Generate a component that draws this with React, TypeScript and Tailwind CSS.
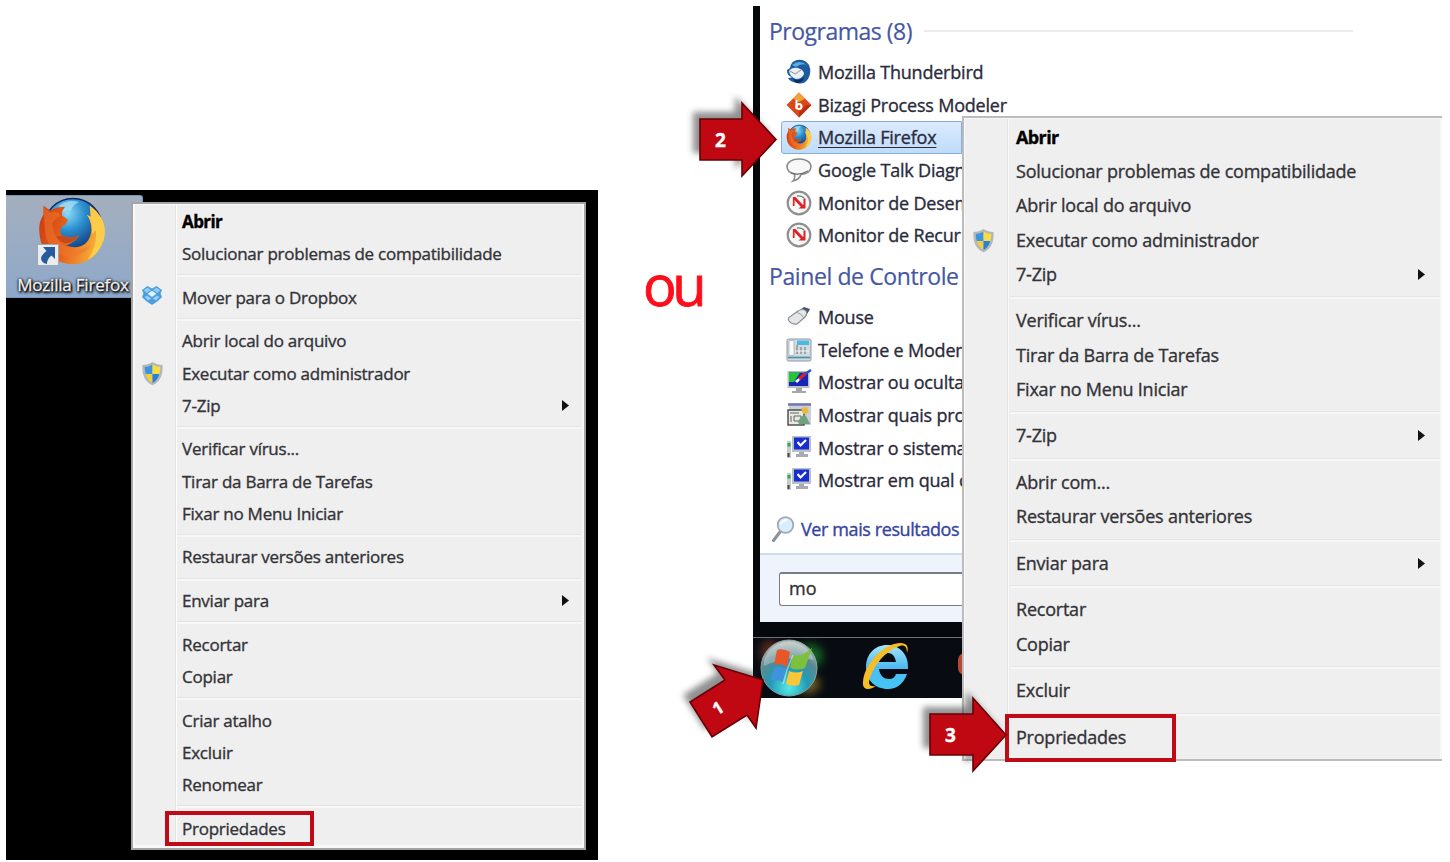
import { ReactNode } from 'react';

type Entry = { label: string; bold?: boolean; icon?: ReactNode; sub?: boolean; boxed?: boolean };

function Shield() {
  return (
    <svg viewBox="0 0 24 26" className="h-[25px] w-[23px]">
      <path d="M12 1 C9 3 5 4 1.500 4 C1 13 3 21 12 25.300 C21 21 23 13 22.500 4 C19 4 15 3 12 1Z" fill="#b4b7ba" />
      <path d="M12 3.500 C9.500 5 7 5.800 4 6 C4 9 4.300 11.500 5 13.500 H12Z" fill="#3c94de" />
      <path d="M12 3.500 C14.500 5 17 5.800 20 6 C20 9 19.700 11.500 19 13.500 H12Z" fill="#f9dd45" />
      <path d="M5 13.500 H12 V23 C8.500 21 6 18 5 13.500Z" fill="#f3ce3a" />
      <path d="M19 13.500 H12 V23 C15.500 21 18 18 19 13.500Z" fill="#2582dc" />
    </svg>
  );
}

function Dropbox() {
  return (
    <svg viewBox="0 0 22 21" className="-mt-[3px] h-[21px] w-[22px]">
      <path d="M6.500 1 L11 3.500 L15.500 1 L21 5 L19.500 8.500 L21 12 L17 16 L11 20 L5 16 L1 12 L2.500 8.500 L1 5Z" fill="#4c9ddb" />
      <path d="M6.500 2.500 L10 5.300 L5.500 8 L2.700 5.200Z M15.500 2.500 L12 5.300 L16.500 8 L19.300 5.200Z" fill="#8fcbf3" />
      <path d="M11 5.800 L15.500 8.700 L11 12 L6.500 8.700Z" fill="#e2f3fd" />
      <path d="M6 10.500 L10.500 13.500 L7 15.500 L3.500 12Z M16 10.500 L11.500 13.500 L15 15.500 L18.500 12Z" fill="#8fcdf5" />
    </svg>
  );
}

function FoxLogo({ className }: { className: string }) {
  return (
    <svg viewBox="0 0 70 70" className={className}>
      <defs>
        <radialGradient id="globe" cx="0.4" cy="0.25" r="0.75">
          <stop offset="0" stopColor="#8fdcf5" />
          <stop offset="0.4" stopColor="#2b8fd0" />
          <stop offset="1" stopColor="#0b2566" />
        </radialGradient>
        <linearGradient id="tail" x1="0" y1="0" x2="1" y2="0.2">
          <stop offset="0" stopColor="#c93a12" />
          <stop offset="0.5" stopColor="#e8641b" />
          <stop offset="1" stopColor="#f7b43c" />
        </linearGradient>
      </defs>
      <circle cx="36" cy="31" r="29.500" fill="url(#globe)" stroke="#0d2b63" strokeWidth="1.500" />
      <path d="M22 9 Q30 2 42 5 Q34 9 34 14 Q27 12 24 18Z" fill="#a9e2f5" opacity="0.75" />
      <path d="M53 9 C66 18 71 31 67 44 C62 60 49 69 34 68 C16 67 3 54 2 37 C1 28 3 23 6 18 L6 9 L13 14 Q18 10 28 10 Q24 15 25 19 Q28 21 31 23 Q29 28 25 30 Q21 35 25 39 Q33 43 42 39 Q38 46 29 49 Q40 54 49 47 C57 39 56 26 50 18 L54 20 Z" fill="url(#tail)" />
      <path d="M53 9 C66 18 71 31 67 44 C64 53 58 60 51 64 C57 54 61 43 59 34 L55 38 C56 29 54 23 50 18 L54 20Z" fill="#fbd34d" opacity="0.85" />
      <path d="M6 10 L13 16 Q20 13 23 19 Q18 21 15 27 Q16 43 29 51 Q42 57 54 49 Q45 61 32 61 Q12 57 8 38Z" fill="#ef762b" opacity="0.55" />
      <path d="M25 39 Q33 43 42 39 Q37 47 28 47 Q22 45 19 40Z" fill="#c9481a" />
    </svg>
  );
}

function Arrow({ box, view, points, children }: { box: string; view: string; points: string; children: ReactNode }) {
  return (
    <div className={box}>
      <svg viewBox={view} className="absolute inset-0 h-full w-full overflow-visible">
        <polygon points={points} fill="#222" opacity="0.5" transform="translate(-7 -7)" className="blur-[3px]" />
        <polygon points={points} fill="#bf0811" stroke="#650006" strokeWidth="1.600" />
      </svg>
      {children}
    </div>
  );
}

function Menu({ groups, row, sep, gutter, text, arrowPad, box }: {
  groups: Entry[][]; row: string; sep: string; gutter: string; text: string; arrowPad: string; box: string;
}) {
  return (
    <div className="flex flex-col">
      {groups.map((group, g) => (
        <div key={g} className="flex flex-col">
          {g > 0 && (
            <div className={`flex items-center ${sep}`}>
              <div className={`shrink-0 ${gutter}`} />
              <div className="h-[3px] flex-1 border-t border-b-2 border-t-[#e4e4e4] border-b-[#f7f7f7]" />
            </div>
          )}
          {group.map((e, i) => (
            <div key={i} className={`flex items-center ${row}`}>
              <div className={`flex shrink-0 justify-center ${gutter}`}>{e.icon}</div>
              <div className={`relative flex flex-1 items-center whitespace-nowrap ${text}`}>
                <span className={e.bold ? 'font-bold tracking-[-0.6px] text-black' : 'text-[#333338]'}>{e.label}</span>
                {e.boxed && <span className={`absolute border-[#bf0a18] ${box}`} />}
              </div>
              {e.sub && (
                <svg viewBox="0 0 7 11" className={`h-[11px] w-[7px] ${arrowPad}`}>
                  <path d="M0 0 L7 5.500 L0 11Z" fill="#111" />
                </svg>
              )}
            </div>
          ))}
        </div>
      ))}
    </div>
  );
}

const desktopMenu: Entry[][] = [
  [{ label: 'Abrir', bold: true }, { label: 'Solucionar problemas de compatibilidade' }],
  [{ label: 'Mover para o Dropbox', icon: <Dropbox /> }],
  [{ label: 'Abrir local do arquivo' }, { label: 'Executar como administrador', icon: <Shield /> }, { label: '7-Zip', sub: true }],
  [{ label: 'Verificar vírus...' }, { label: 'Tirar da Barra de Tarefas' }, { label: 'Fixar no Menu Iniciar' }],
  [{ label: 'Restaurar versões anteriores' }],
  [{ label: 'Enviar para', sub: true }],
  [{ label: 'Recortar' }, { label: 'Copiar' }],
  [{ label: 'Criar atalho' }, { label: 'Excluir' }, { label: 'Renomear' }],
  [{ label: 'Propriedades', boxed: true }],
];

const startMenu: Entry[][] = [
  [
    { label: 'Abrir', bold: true },
    { label: 'Solucionar problemas de compatibilidade' },
    { label: 'Abrir local do arquivo' },
    { label: 'Executar como administrador', icon: <Shield /> },
    { label: '7-Zip', sub: true },
  ],
  [{ label: 'Verificar vírus...' }, { label: 'Tirar da Barra de Tarefas' }, { label: 'Fixar no Menu Iniciar' }],
  [{ label: '7-Zip', sub: true }],
  [{ label: 'Abrir com...' }, { label: 'Restaurar versões anteriores' }],
  [{ label: 'Enviar para', sub: true }],
  [{ label: 'Recortar' }, { label: 'Copiar' }],
  [{ label: 'Excluir' }],
  [{ label: 'Propriedades', boxed: true }],
];

function Icon({ children }: { children: ReactNode }) {
  return <svg viewBox="0 0 26 26" className="h-[26px] w-[26px]">{children}</svg>;
}

const thunderbird = (
  <Icon>
    <path d="M11 1 Q19 0 23 6 Q26 13 22 20 Q18 26 11 24 Q4 23 2 19 Q5 19 6 18 Q1 17 1 11 L4 9 Q5 2 11 1Z" fill="#1d5b9f" />
    <path d="M6 6 Q13 0 21 6 Q15 4 10 8Z" fill="#5aabe0" />
    <path d="M3 12 Q6 8 12 9 Q18 11 18 15 Q16 20 10 20 Q4 18 3 12Z" fill="#eceff1" />
    <path d="M4 12 L9 15 L15 11" fill="none" stroke="#86949f" />
    <path d="M7 20 Q14 23 18 18 Q17 24 10 24Z" fill="#0c2c5c" />
  </Icon>
);
const bizagi = (
  <Icon>
    <path d="M13 0.500 L25.500 13 L13 25.500 L0.500 13Z" fill="#d9481c" />
    <path d="M13 0.500 L19 6.500 L13 10 L7 6.500Z" fill="#f0a13a" />
    <path d="M13 25.500 L25.500 13 H20 L13 20Z" fill="#b92f10" />
    <path d="M10.500 8 V17" stroke="#fff" strokeWidth="2" />
    <circle cx="13" cy="14.500" r="2.500" fill="none" stroke="#fff" strokeWidth="2" />
  </Icon>
);
const talk = (
  <Icon>
    <path d="M13 2 C20 2 25 5 25 9.500 C25 14 21 17 15 17.500 C14 21 11 23 7 24 C9 22 9 20 8.500 17 C4 16 1 14 1 9.500 C1 5 6 2 13 2Z" fill="#f7f7f7" stroke="#8b8b8b" strokeWidth="1.600" />
    <path d="M5 16 Q13 19 22 14" stroke="#666" strokeWidth="1.200" fill="none" />
  </Icon>
);
const gauge = (
  <Icon>
    <circle cx="13" cy="13" r="11.300" fill="#f6f7f6" stroke="#8d908f" strokeWidth="2.200" />
    <path d="M11 6 A8 8 0 0 1 18 8" fill="none" stroke="#5e8c76" strokeWidth="1.300" />
    <path d="M8 7.500 L16.500 16.500" fill="none" stroke="#df2027" strokeWidth="2.800" />
    <path d="M7.700 7 V16" stroke="#df2027" strokeWidth="1.700" />
    <path d="M19.500 8.500 V18.500 H12.500 L17.500 14.500 V8.500Z" fill="#df2027" />
  </Icon>
);
const mouse = (
  <Icon>
    <path d="M14 6 L18 3 L24 5 L20 12Z" fill="#46536c" />
    <path d="M12 7 Q17 4 20 7 Q22 10 18 14 L11 20 Q6 21 3 17 Q1 14 5 12Z" fill="#e4e6e8" stroke="#8b8f94" strokeWidth="1.200" />
    <path d="M10 8 Q15 9 18 14" fill="none" stroke="#9a9da3" />
  </Icon>
);
const phone = (
  <Icon>
    <rect x="1" y="2" width="24" height="22" rx="1.500" fill="#d3dade" stroke="#8f999f" />
    <rect x="11" y="3.500" width="12" height="4.500" fill="#4cb9e2" />
    <rect x="3" y="3.500" width="5" height="15" rx="1" fill="#fafafa" stroke="#a1a9ae" strokeWidth="0.700" />
    <path d="M11 8 V17 M15 10 V17 M19 10 V17" stroke="#7e8990" strokeWidth="1.300" />
    <path d="M9 14 H23" stroke="#f4f6f7" strokeWidth="1" />
    <path d="M2 20.500 H24" stroke="#4f93b2" strokeWidth="1.800" />
  </Icon>
);
const paint = (
  <Icon>
    <rect x="1.500" y="2" width="22" height="17" fill="#b9bfc1" />
    <rect x="3" y="3.500" width="19" height="13.500" fill="#1727b5" />
    <path d="M3 3.500 H14 L8 13 H3Z" fill="#24c636" />
    <path d="M9 12 L14 8 L15 10 L11 14Z" fill="#fff" />
    <path d="M13 10 L20 4" stroke="#d9232b" strokeWidth="3" />
    <path d="M19 5 L25 1" stroke="#2456c4" strokeWidth="2.500" />
    <path d="M10 19 H16 V22 H20 V24 H6 V22 H10Z" fill="#a5aaa9" />
  </Icon>
);
const programs = (
  <Icon>
    <rect x="3" y="1" width="22" height="22" fill="#c9cfdb" />
    <path d="M2 2.500 H25" stroke="#7675b2" strokeWidth="2.500" />
    <rect x="2" y="8" width="16" height="15" fill="#e9e9df" stroke="#45474a" strokeWidth="1.400" />
    <path d="M4 11 H13 M5 14 V20 M8 14 H15 V19 H8Z" stroke="#62666b" fill="none" />
    <path d="M15 6 L21 5 L23 11 L17 12Z" fill="#ebb93c" />
    <path d="M12 20 Q16 11 20 14 L24 22 H13Z" fill="#6fa27b" />
  </Icon>
);
const computer = (
  <Icon>
    <rect x="1" y="6" width="4" height="17" fill="#c6cacd" />
    <rect x="1.500" y="8" width="3" height="3.500" fill="#2cae45" />
    <rect x="1.500" y="18" width="2" height="4" fill="#41464a" />
    <rect x="6" y="1" width="19" height="16" fill="#bcc1c7" />
    <rect x="8" y="2.500" width="15" height="12" fill="#182dcf" />
    <path d="M11.500 7 L14.500 10.500 L20 5" fill="none" stroke="#fff" strokeWidth="2.200" />
    <path d="M13 17 H18 V19 H22 V22 H10 V19 H13Z" fill="#a7abae" />
  </Icon>
);

type Item = { label: string; icon: ReactNode; hot?: boolean };
const programList: Item[] = [
  { label: 'Mozilla Thunderbird', icon: thunderbird },
  { label: 'Bizagi Process Modeler', icon: bizagi },
  { label: 'Mozilla Firefox', icon: <FoxLogo className="h-[27px] w-[26px]" />, hot: true },
  { label: 'Google Talk Diagn', icon: talk },
  { label: 'Monitor de Desem', icon: gauge },
  { label: 'Monitor de Recur', icon: gauge },
];
const controlList: Item[] = [
  { label: 'Mouse', icon: mouse },
  { label: 'Telefone e Modem', icon: phone },
  { label: 'Mostrar ou oculta', icon: paint },
  { label: 'Mostrar quais pro', icon: programs },
  { label: 'Mostrar o sistema', icon: computer },
  { label: 'Mostrar em qual c', icon: computer },
];

function AppRows({ items }: { items: Item[] }) {
  return (
    <div className="ml-[21px] flex flex-col">
      {items.map((it, i) => (
        <div
          key={i}
          className={`flex h-[32.7px] items-center gap-[6px] rounded-l-[3px] border pl-[4px] text-[18px] whitespace-nowrap tracking-[-0.2px] text-[#2b2b3c] ${
            it.hot ? 'border-[#86acd8] bg-linear-to-b from-[#dcebfd] to-[#bfdbfb]' : 'border-transparent'
          }`}
        >
          <div className="-mt-px shrink-0">{it.icon}</div>
          <span className={it.hot ? 'underline underline-offset-[3px]' : ''}>{it.label}</span>
        </div>
      ))}
    </div>
  );
}

function StartOrb() {
  return (
    <svg viewBox="0 0 66 60" className="h-[60px] w-[66px] overflow-visible">
      <defs>
        <radialGradient id="orb" cx="0.5" cy="0.85" r="0.85">
          <stop offset="0" stopColor="#55ebe8" />
          <stop offset="0.4" stopColor="#2399b5" />
          <stop offset="0.7" stopColor="#5c8a91" />
          <stop offset="1" stopColor="#c2c4bd" />
        </radialGradient>
      </defs>
      <ellipse cx="50" cy="18" rx="13" ry="12" fill="#1f9d2b" opacity="0.6" className="blur-[4px]" />
      <ellipse cx="10" cy="14" rx="10" ry="12" fill="#a4462b" opacity="0.5" className="blur-[4px]" />
      <ellipse cx="48" cy="46" rx="12" ry="10" fill="#a78b31" opacity="0.6" className="blur-[4px]" />
      <circle cx="29" cy="30" r="28" fill="url(#orb)" stroke="#87a5a8" strokeWidth="1" />
      <path d="M4 22 Q12 4 29 4 Q46 4 54 22 Q30 16 4 28Z" fill="#fff" opacity="0.3" />
      <path d="M17 12 Q23 10 30 14 L27 29 Q20 24 14 27Z" fill="#e9562a" />
      <path d="M33 17 Q41 20 52 10 L45 30 Q38 33 30 30Z" fill="#7cc03d" />
      <path d="M14 30 Q19 27 26 31 L23 44 Q17 40 10 43Z" fill="#3f93dc" />
      <path d="M29 33 Q36 36 43 33 L39 47 Q33 49 26 46Z" fill="#fbc738" />
      <path d="M33 17 L27 32 L23 46" stroke="#eaf5dd" strokeWidth="1.500" opacity="0.5" fill="none" />
    </svg>
  );
}

function Explorer() {
  return (
    <svg viewBox="0 0 50 50" className="h-[50px] w-[50px]">
      <defs>
        <linearGradient id="ie" x1="0" y1="0" x2="0" y2="1">
          <stop offset="0" stopColor="#a4e6fb" />
          <stop offset="0.5" stopColor="#50baf0" />
          <stop offset="1" stopColor="#43c7f5" />
        </linearGradient>
      </defs>
      <path fillRule="evenodd" d="M26 4 C39 4 48 14 47 28 H18 C19 35 23 38 28 38 C32 38 34 36 35 33 H46 C43 42 36 48 27 48 C14 48 5 39 5 26 C5 13 14 4 26 4Z M18 21 H35 C34 15 31 12 27 12 C22 12 19 15 18 21Z" fill="url(#ie)" />
      <path d="M46 12 C49 3 43 0 33 3 C17 8 3 26 2 41 C1 49 8 50 15 45 C8 46 7 43 9 37 C13 24 24 11 36 6 C42 3 46 4 46 12Z" fill="#f5bd27" />
    </svg>
  );
}

export default function App() {
  return (
    <div className="relative h-[862px] w-[1450px] overflow-hidden bg-white font-['Open_Sans',sans-serif] [-webkit-text-stroke-width:0.35px]">
      <div className="flex items-start">
        <section className="relative mt-[190px] ml-[6px] flex h-[670px] w-[592px] flex-col bg-black">
          <div className="mt-[5px] flex h-[103px] w-[137px] flex-col items-center rounded-r-[3px] border border-l-0 border-[#7697bd] bg-linear-to-b from-[#a4afbd] to-[#8ea8ca]">
            <div className="relative mt-px mr-[4px] h-[69px] w-[70px] shrink-0">
              <FoxLogo className="h-[69px] w-[70px]" />
              <svg viewBox="0 0 22 22" className="absolute bottom-0 left-0 h-[22px] w-[22px]">
                <rect x="0.500" y="0.500" width="21" height="21" fill="#e9edf1" stroke="#a2a7ac" />
                <path d="M6 3 H18 V15 L14.500 11.500 Q10 15 10 20 Q4 19 4 14 Q5 10 9.500 7Z" fill="#265b9e" />
              </svg>
            </div>
            <span className="mt-[7px] mr-[2px] text-[17px] leading-[24px] tracking-[-0.2px] whitespace-nowrap text-[#f0f0f0] [text-shadow:0_0_2px_#000,1px_1px_2px_#000,0_0_3px_#000,1px_2px_3px_#000]">Mozilla Firefox</span>
          </div>
          <div className="absolute top-[12px] left-[125px] h-[648px] w-[455px] border-2 border-[#a5a5a5] bg-[#f9f9f9] p-[2px]">
            <div className="relative h-full bg-[#efefef]">
              <div className="absolute inset-y-0 left-[40px] w-[2px] border-l border-[#e3e3e3] bg-white" />
              <div className="relative -mt-[0.6px]">
                <Menu groups={desktopMenu} row="h-[32.2px]" sep="h-[11.5px]" gutter="w-[42px] pr-[8px]" text="pl-[5px] text-[17px] tracking-[-0.25px]" arrowPad="mr-[13px]" box="top-[-5px] left-[-12px] h-[35px] w-[149px] border-[4px]" />
              </div>
            </div>
          </div>
        </section>

        <div className="mt-[256px] ml-[45px] w-[62px] text-[56px] leading-[56px] tracking-[-4.5px] text-[#ff0d1a] [-webkit-text-stroke-width:0.8px]">ou</div>

        <section className="relative mt-[6px] ml-[48px] w-[209px]">
          <div className="h-[618px] border-l-[7px] border-[#05080b] bg-white">
            <div className="flex h-[50px] w-[593px] items-center gap-[12px] pl-[9px] text-[23px] whitespace-nowrap tracking-[-0.5px] text-[#4557a5] [-webkit-text-stroke-width:0.2px]">
              <span>Programas (8)</span>
              <span className="h-[2px] flex-1 bg-[#ececec]" />
            </div>
            <AppRows items={programList} />
            <div className="flex h-[49px] items-center pl-[9px] text-[23px] whitespace-nowrap tracking-[-0.4px] text-[#4557a5] [-webkit-text-stroke-width:0.2px]">Painel de Controle</div>
            <AppRows items={controlList} />
            <div className="mt-[8px] flex h-[48px] items-center gap-[6px] pl-[12px] text-[18px] tracking-[-0.4px] whitespace-nowrap text-[#3444a0]">
              <svg viewBox="0 0 23 26" className="h-[26px] w-[23px] shrink-0">
                <path d="M8 16 L1.500 24.500" stroke="#8d9297" strokeWidth="3" strokeLinecap="round" />
                <circle cx="13.500" cy="9" r="7.800" fill="#d9edfb" stroke="#a0acb8" strokeWidth="1.800" />
                <path d="M9 8 Q11 4 15 4" stroke="#fff" strokeWidth="2" fill="none" />
              </svg>
              <span>Ver mais resultados</span>
            </div>
            <div className="flex h-[69px] items-center border-t-2 border-[#cfdcec] bg-[#eff3fc] pl-[19px]">
              <div className="flex h-[34px] flex-1 items-center rounded-l-[3px] border border-t-2 border-r-0 border-[#777d83] bg-white pb-[2px] pl-[9px] text-[18px] text-[#333]">mo</div>
            </div>
          </div>
          <div className="-mt-[2px] h-[16px] border-b border-[#6c7277] bg-[#05090d]" />
          <div className="flex h-[60px] items-center overflow-hidden bg-[#080c12] pl-[7px]">
            <StartOrb />
            <div className="-mt-[4px] ml-[35px] shrink-0"><Explorer /></div>
            <div className="-mt-[8px] ml-[47px] h-[22px] w-[14px] shrink-0 rounded-full bg-[#b94a31]" />
          </div>
        </section>
      </div>

      <div className="absolute top-[116px] left-[962px] h-[645px] w-[480px] border-y-2 border-l-2 border-[#bcbcbc] bg-[#f8f8f8] pt-px pl-px">
        <div className="relative h-full w-[475px] bg-[#efefef]">
          <div className="absolute inset-y-0 left-[42px] w-[2px] border-l border-[#e3e3e3] bg-[#f8f8f8]" />
          <div className="relative pt-[1.5px]">
            <Menu groups={startMenu} row="h-[34.2px]" sep="h-[12.43px]" gutter="w-[45px] pr-[8px]" text="pl-[6px] text-[18px] tracking-[-0.22px]" arrowPad="mr-[15px]" box="top-[-10px] left-[-5px] h-[48px] w-[171px] border-[4px]" />
          </div>
        </div>
      </div>

      <Arrow box="absolute top-[102px] left-[700px] flex h-[75px] w-[77px] items-center pl-[15px] pt-[2px]" view="0 0 77 75" points="0,17 42,17 42,1 76,37.5 42,74 42,58 0,58">
        <span className="relative text-[19px] font-bold text-white">2</span>
      </Arrow>
      <Arrow box="absolute top-[664px] left-[689px] flex h-[74px] w-[75px] items-center pl-[24px] pt-[14px]" view="0 0 75 74" points="25,1 74,16 67,64 58,51 23,73 1,38 36,16">
        <span className="relative rotate-[-32deg] text-[17px] font-bold text-white">1</span>
      </Arrow>
      <Arrow box="absolute top-[697px] left-[930px] flex h-[75px] w-[77px] items-center pl-[15px] pt-[2px]" view="0 0 77 75" points="0,17 43,17 43,1 76,38 43,74 43,58 0,58">
        <span className="relative text-[19px] font-bold text-white">3</span>
      </Arrow>
    </div>
  );
}
